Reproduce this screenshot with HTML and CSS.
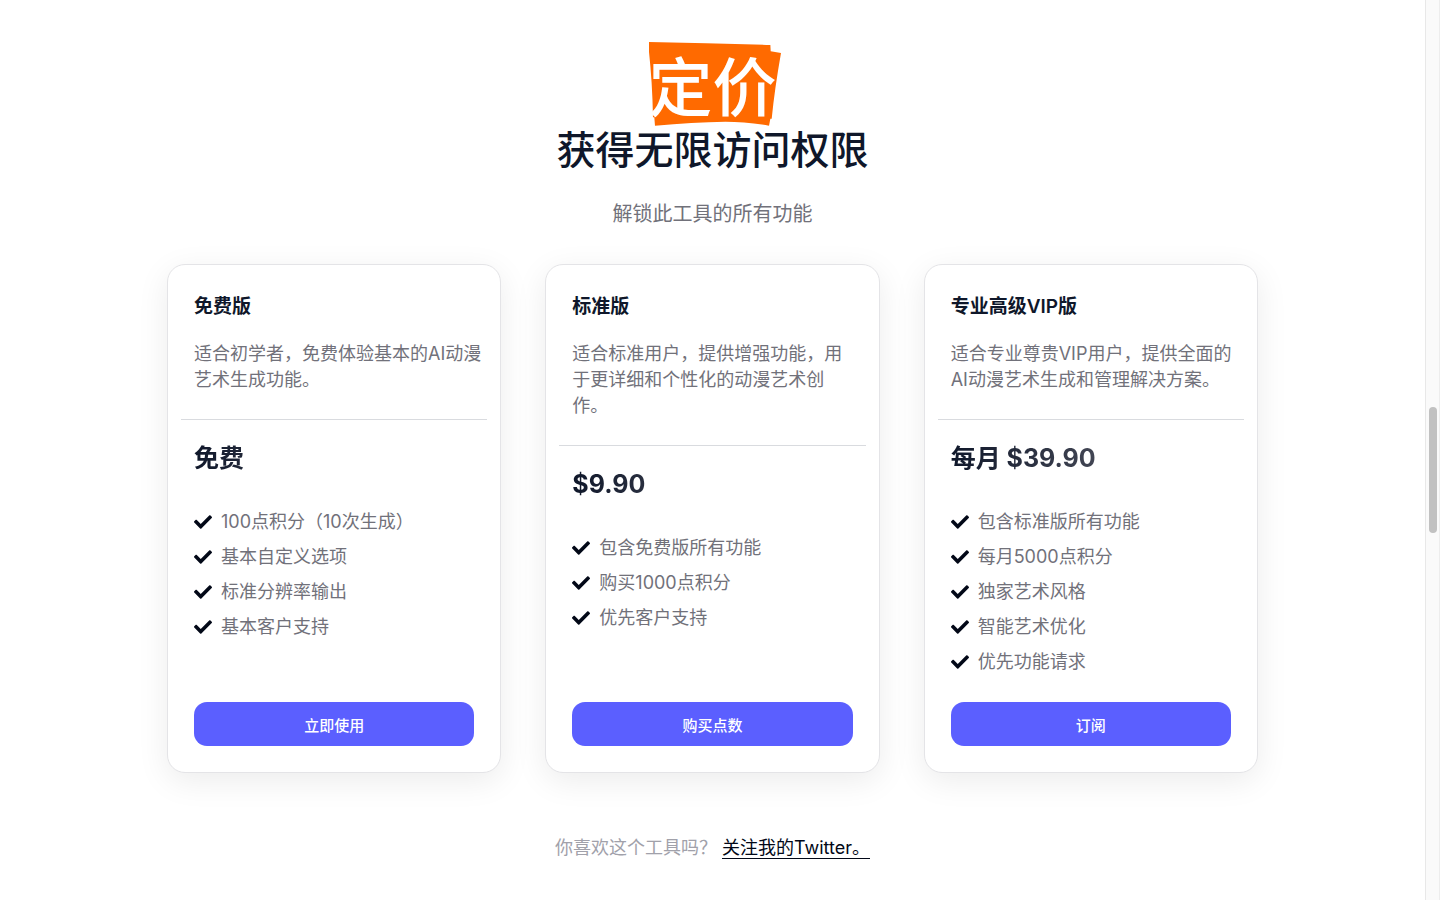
FILE: index.html
```
<!DOCTYPE html>
<html lang="zh-CN">
<head>
    <meta charset="UTF-8">
    <meta name="viewport" content="width=device-width, initial-scale=1.0">
    <title>定价</title>
    <link rel="stylesheet" href="styles.css">
</head>
<body>
    <svg class="defs" width="0" height="0" aria-hidden="true">
        <symbol id="check" viewBox="0 0 512 512">
            <path fill="currentColor" d="M173.898 439.404l-166.4-166.4c-9.997-9.997-9.997-26.206 0-36.204l36.203-36.204c9.997-9.998 26.207-9.998 36.204 0L192 312.69 432.095 72.596c9.997-9.997 26.207-9.997 36.204 0l36.203 36.204c9.997 9.997 9.997 26.206 0 36.204l-294.4 294.401c-9.998 9.997-26.207 9.997-36.204-.001z"/>
        </symbol>
    </svg>

    <main class="pricing">
        <header class="heading">
            <h2>
                <span class="badge">
                    <svg class="badge-bg" viewBox="0 0 397 252" preserveAspectRatio="none" aria-hidden="true">
                        <path fill="#ff6a00" d="M0 0 Q180 3 365 9 L366 28 L397 33 Q378 140 369 230 L365 230 L361 251 Q290 239 230 239 Q130 241 18 251 L16 226 L12 226 Q10 120 0 30 Z"/>
                    </svg>
                    <span class="badge-text">定价</span>
                </span>
                <span class="title">获得无限访问权限</span>
            </h2>
            <p>解锁此工具的所有功能</p>
        </header>

        <section class="plans">
            <article class="card">
                <h3>免费版</h3>
                <p class="desc">适合初学者，免费体验基本的AI动漫艺术生成功能。</p>
                <hr>
                <div class="price"><span>免费</span></div>
                <ul>
                    <li><svg><use href="#check"/></svg>100点积分（10次生成）</li>
                    <li><svg><use href="#check"/></svg>基本自定义选项</li>
                    <li><svg><use href="#check"/></svg>标准分辨率输出</li>
                    <li><svg><use href="#check"/></svg>基本客户支持</li>
                </ul>
                <button type="button">立即使用</button>
            </article>

            <article class="card">
                <h3>标准版</h3>
                <p class="desc">适合标准用户，提供增强功能，用<br>于更详细和个性化的动漫艺术创<br>作。</p>
                <hr>
                <div class="price"><span>$9.90</span></div>
                <ul>
                    <li><svg><use href="#check"/></svg>包含免费版所有功能</li>
                    <li><svg><use href="#check"/></svg>购买1000点积分</li>
                    <li><svg><use href="#check"/></svg>优先客户支持</li>
                </ul>
                <button type="button">购买点数</button>
            </article>

            <article class="card">
                <h3>专业高级VIP版</h3>
                <p class="desc">适合专业尊贵VIP用户，提供全面的AI动漫艺术生成和管理解决方案。</p>
                <hr>
                <div class="price"><span>每月 $39.90</span></div>
                <ul>
                    <li><svg><use href="#check"/></svg>包含标准版所有功能</li>
                    <li><svg><use href="#check"/></svg>每月5000点积分</li>
                    <li><svg><use href="#check"/></svg>独家艺术风格</li>
                    <li><svg><use href="#check"/></svg>智能艺术优化</li>
                    <li><svg><use href="#check"/></svg>优先功能请求</li>
                </ul>
                <button type="button">订阅</button>
            </article>
        </section>

        <footer class="follow">
            <span>你喜欢这个工具吗？</span>
            <a href="#">关注我的Twitter。</a>
        </footer>
    </main>

    <div class="scroll-track" aria-hidden="true">
        <div class="scroll-thumb"></div>
    </div>
</body>
</html>
```

FILE: styles.css
```
* {
    box-sizing: border-box;
}

body {
    margin: 0;
    display: flex;
    min-height: 100vh;
    background-color: #fff;
    color: #020817;
    font-family: Inter, "Noto Sans CJK SC", sans-serif;
    font-size: 18px;
    line-height: 26px;
}

h2, h3, p, ul {
    margin: 0;
    padding: 0;
}

.defs {
    position: absolute;
}

.pricing {
    flex: 1;
    display: flex;
    flex-direction: column;
    align-items: center;
    padding: 42px 24px 32px;
}

/* heading */
.heading {
    text-align: center;
}

.heading h2 {
    display: flex;
    flex-direction: column;
    align-items: center;
    color: #0f172a;
    font-weight: 500;
}

.badge {
    position: relative;
    padding: 8px 1px 0;
    color: #fff;
    font-size: 64px;
    line-height: 76px;
}

.badge-bg {
    position: absolute;
    top: 0;
    left: 2px;
    width: 132px;
    height: 84px;
}

.badge-text {
    position: relative;
}

.title {
    font-size: 39px;
    line-height: 47px;
}

.heading p {
    margin-top: 28px;
    color: #71717a;
    font-size: 20px;
}

/* plan cards */
.plans {
    display: grid;
    grid-template-columns: repeat(3, 1fr);
    gap: 44px;
    width: 100%;
    max-width: 1091px;
    margin-top: 37px;
}

.card {
    display: flex;
    flex-direction: column;
    padding: 27px 13px 26px;
    border: 1px solid #e4e4e7;
    border-radius: 18px;
    background-color: #fff;
    box-shadow: 0 8px 32px rgba(0, 0, 0, 0.08);
}

.card h3 {
    padding: 0 13px;
    color: #0f172a;
    font-size: 19px;
    font-weight: 600;
    line-height: 30px;
}

.desc {
    padding: 0 5px 0 13px;
    margin-top: 19px;
    color: #71717a;
}

.card hr {
    width: 100%;
    margin: 26px 0 20px;
    border: 0;
    border-top: 1px solid #d9dbdf;
}

.price {
    padding: 0 13px;
    font-size: 25px;
    font-weight: 700;
    line-height: 36px;
}

.price span {
    display: block;
    color: transparent;
    background: linear-gradient(to right, #0f172a, #71717a);
    background-clip: text;
    -webkit-background-clip: text;
}

.card ul {
    display: flex;
    flex-direction: column;
    gap: 9px;
    margin: 33px 0 27px;
    padding: 0 13px;
    list-style: none;
    color: #71717a;
}

.card li {
    display: flex;
    align-items: center;
    gap: 9px;
}

.card li svg {
    width: 18px;
    height: 18px;
    color: #020817;
}

.card button {
    height: 44px;
    margin: auto 13px 0;
    border: 0;
    border-radius: 13px;
    background-color: #5b5fff;
    color: #fff;
    font-family: inherit;
    font-size: 15px;
    font-weight: 500;
    cursor: pointer;
}

/* footer line */
.follow {
    display: flex;
    gap: 5px;
    margin-top: 65px;
    color: #a1a1aa;
    line-height: 20px;
}

.follow a {
    color: #020817;
    border-bottom: 1px solid #020817;
    text-decoration: none;
}

/* scrollbar */
.scroll-track {
    width: 15px;
    padding: 407px 2px 0 3px;
    border-left: 1px solid #e8e8e8;
    border-right: 1px solid #ededed;
    background-color: #fafafa;
}

.scroll-thumb {
    width: 8px;
    height: 126px;
    border-radius: 4px;
    background-color: #c1c1c1;
}
```
